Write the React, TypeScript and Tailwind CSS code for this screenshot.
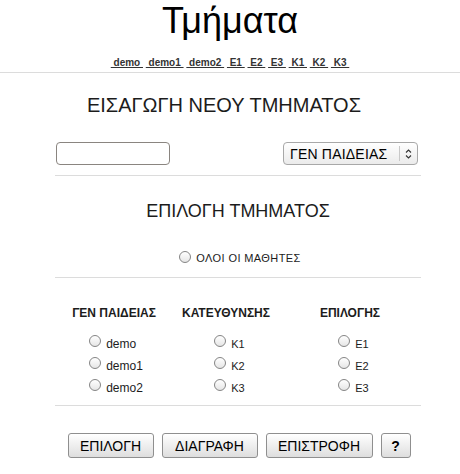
import React from 'react'

const links = ['demo', 'demo1', 'demo2', 'E1', 'E2', 'E3', 'K1', 'K2', 'K3']

const columns = [
    { title: 'ΓΕΝ ΠΑΙΔΕΙΑΣ', items: ['demo', 'demo1', 'demo2'], size: 'text-[12px]', pad: 'pl-[4px]' },
    { title: 'ΚΑΤΕΥΘΥΝΣΗΣ', items: ['K1', 'K2', 'K3'], size: 'text-[11px]', pad: 'pl-[7px]' },
    { title: 'ΕΠΙΛΟΓΗΣ', items: ['E1', 'E2', 'E3'], size: 'text-[11px]', pad: 'pl-[7px]' },
]

const Radio = () => (
    <span className="inline-block w-[12px] h-[12px] rounded-full border border-[#858585] bg-gradient-to-b from-white to-[#e6e6e6] mb-[2px]" />
)

const Button = ({ label, className }: { label: string, className: string }) => (
    <button className={`h-[25px] rounded-[3px] border border-[#8f8f8f] bg-gradient-to-b from-white to-[#dedede] text-[14px] leading-[16px] text-black ${className}`}>
        {label}
    </button>
)

const Hr = ({ className }: { className: string }) => (
    <div className={`h-px bg-[#dcdcdc] ${className}`} />
)

const App = () => {
    return (
        <div className="w-[460px] h-[474px] bg-white text-[#1c1c1c] font-['Liberation_Sans',Arial,sans-serif] overflow-hidden">
            <h1 className="text-center text-[36px] leading-[41px] text-black">Τμήματα</h1>
            <div className="mt-[16px] text-center text-[10px] leading-[12px] font-bold text-[#333]">
                {links.map((l, i) => (
                    <React.Fragment key={l}>
                        {i > 0 && ' '}
                        <a className="underline underline-offset-[1px] cursor-pointer">{'\u00a0' + l + '\u00a0'}</a>
                    </React.Fragment>
                ))}
            </div>
            <Hr className="mt-[3px]" />

            <div className="ml-[55px] w-[366px]">
                <h2 className="mt-[21px] -ml-[55px] w-[460px] pr-[12px] text-center text-[20px] leading-[23px]">ΕΙΣΑΓΩΓΗ ΝΕΟΥ ΤΜΗΜΑΤΟΣ</h2>

                <div className="mt-[25px] flex items-center justify-between pl-[1px] pr-[3px]">
                    <input
                        type="text"
                        className="w-[114px] h-[23px] rounded-[4px] border border-[#8a8580] bg-white outline-none"
                    />
                    <div className="w-[135px] h-[23px] rounded-[4px] border border-[#a8a8a8] bg-gradient-to-b from-white to-[#ebebeb] flex items-center">
                        <span className="flex-1 pl-[6px] text-[14px] leading-[16px] text-black tracking-[0.2px]">ΓΕΝ ΠΑΙΔΕΙΑΣ</span>
                        <span className="w-px h-[15px] bg-[#c8c8c8]" />
                        <svg width="15" height="12" viewBox="0 0 15 12" className="mx-[1px]">
                            <path d="M5 4.5 L7.5 2 L10 4.5 M5 7.5 L7.5 10 L10 7.5" fill="none" stroke="#333" strokeWidth="1.1" />
                        </svg>
                    </div>
                </div>

                <Hr className="mt-[10px]" />

                <h2 className="mt-[25px] text-center text-[18px] leading-[21px]">ΕΠΙΛΟΓΗ ΤΜΗΜΑΤΟΣ</h2>

                <div className="mt-[28px] h-[16px] flex items-center justify-center gap-[5px] text-[11px] pl-[4px]">
                    <Radio />
                    <span className="tracking-[0.4px]">ΟΛΟΙ ΟΙ ΜΑΘΗΤΕΣ</span>
                </div>

                <Hr className="mt-[11px]" />

                <div className="mt-[28px] grid grid-cols-[118px_106px_142px]">
                    {columns.map(col => (
                        <div key={col.title} className="flex flex-col items-center">
                            <div className="text-[12px] leading-[14px] font-bold">{col.title}</div>
                            <div className={`mt-[11px] flex flex-col ${col.pad}`}>
                                {col.items.map(item => (
                                    <div key={item} className={`h-[22px] flex items-center gap-[5px] ${col.size}`}>
                                        <Radio />
                                        <span className="mt-[3px] leading-[14px]">{item}</span>
                                    </div>
                                ))}
                            </div>
                        </div>
                    ))}
                </div>

                <Hr className="mt-[8px]" />

                <div className="mt-[27px] flex justify-center gap-[8px] pl-[2px]">
                    <Button label="ΕΠΙΛΟΓΗ" className="w-[86px]" />
                    <Button label="ΔΙΑΓΡΑΦΗ" className="w-[96px]" />
                    <Button label="ΕΠΙΣΤΡΟΦΗ" className="w-[107px]" />
                    <Button label="?" className="w-[30px] font-bold" />
                </div>
            </div>
        </div>
    )
}

export default App
